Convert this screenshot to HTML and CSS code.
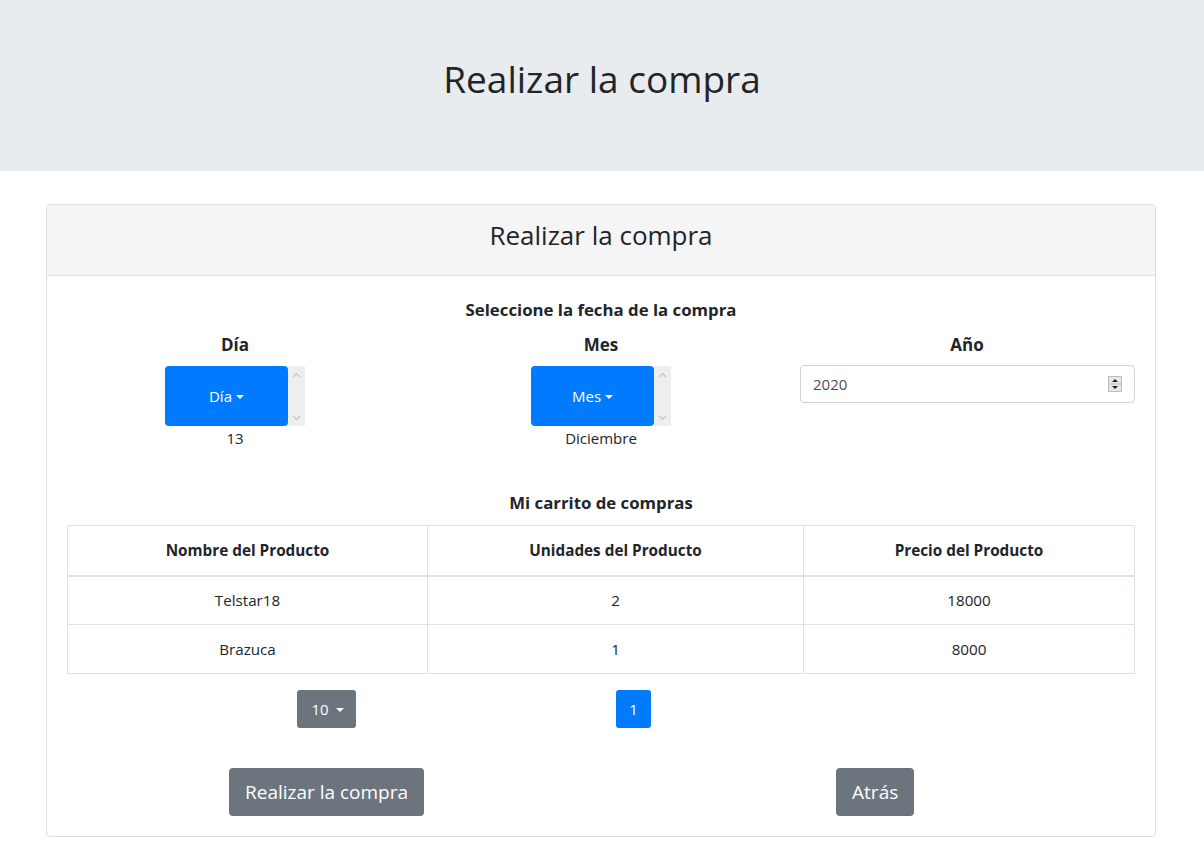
FILE: index.html
```html
<!DOCTYPE html>
<html lang="es">
<head>
<meta charset="utf-8">
<title>Realizar la compra</title>
<link rel="stylesheet" href="styles.css">
</head>
<body>
<header class="jumbo">
  <h1 class="jumbo-title">Realizar la compra</h1>
</header>
<main class="container">
  <section class="card">
    <div class="card-header"><h2 class="card-title">Realizar la compra</h2></div>
    <div class="card-body">
      <h5 class="section-title">Seleccione la fecha de la compra</h5>
      <div class="date-row">
        <div class="date-col">
          <div class="label">Día</div>
          <div class="picker">
            <button class="btn-primary picker-btn">Día<span class="caret"></span></button>
            <div class="scrollbar">
              <svg width="9" height="6" viewBox="0 0 9 6"><path d="M1 5 L4.5 1.5 L8 5" fill="none" stroke="#c3c3c3" stroke-width="1.2"/></svg>
              <svg width="9" height="6" viewBox="0 0 9 6"><path d="M1 1 L4.5 4.5 L8 1" fill="none" stroke="#c3c3c3" stroke-width="1.2"/></svg>
            </div>
          </div>
          <div class="value">13</div>
        </div>
        <div class="date-col">
          <div class="label">Mes</div>
          <div class="picker">
            <button class="btn-primary picker-btn">Mes<span class="caret"></span></button>
            <div class="scrollbar">
              <svg width="9" height="6" viewBox="0 0 9 6"><path d="M1 5 L4.5 1.5 L8 5" fill="none" stroke="#c3c3c3" stroke-width="1.2"/></svg>
              <svg width="9" height="6" viewBox="0 0 9 6"><path d="M1 1 L4.5 4.5 L8 1" fill="none" stroke="#c3c3c3" stroke-width="1.2"/></svg>
            </div>
          </div>
          <div class="value">Diciembre</div>
        </div>
        <div class="date-col">
          <div class="label">Año</div>
          <div class="year-input">
            <span class="year-text">2020</span>
            <span class="spinner">
              <svg width="14" height="16" viewBox="0 0 14 16">
                <rect x="0.5" y="0.5" width="13" height="15" fill="#e8e8e8" stroke="#bdbdbd"/>
                <line x1="1" y1="8" x2="13" y2="8" stroke="#bdbdbd"/>
                <path d="M4 6 L7 3 L10 6 Z" fill="#222"/>
                <path d="M4 10 L7 13 L10 10 Z" fill="#222"/>
              </svg>
            </span>
          </div>
        </div>
      </div>

      <h5 class="section-title cart-title">Mi carrito de compras</h5>
      <table class="cart">
        <thead>
          <tr><th class="c1">Nombre del Producto</th><th class="c2">Unidades del Producto</th><th class="c3">Precio del Producto</th></tr>
        </thead>
        <tbody>
          <tr><td>Telstar18</td><td>2</td><td>18000</td></tr>
          <tr><td>Brazuca</td><td>1</td><td>8000</td></tr>
        </tbody>
      </table>

      <div class="pager">
        <button class="btn-secondary size-btn">10<span class="caret"></span></button>
        <button class="btn-primary page-btn">1</button>
      </div>

      <div class="actions">
        <button class="btn-secondary btn-lg">Realizar la compra</button>
        <button class="btn-secondary btn-lg">Atrás</button>
      </div>
    </div>
  </section>
</main>
</body>
</html>
```
FILE: styles.css
```css
* { box-sizing: border-box; }
html, body { margin: 0; padding: 0; }
body {
  font-family: "Open Sans", "Noto Sans", "Liberation Sans", sans-serif;
  font-size: 15px;
  color: #212529;
  background: #fff;
}
button { font-family: inherit; border: 0; cursor: pointer; }

.jumbo {
  background: #e9ecef;
  height: 171px;
  display: flex;
  justify-content: center;
  padding-top: 54px;
  margin-bottom: 33px;
}
.jumbo-title {
  margin: 0;
  font-size: 37px;
  font-weight: 400;
  line-height: 50px;
}

.container {
  width: 1110px;
  margin: 0 48px 0 46px;
}
.card {
  border: 1px solid #dfdfdf;
  border-radius: 4px;
  height: 633px;
}
.card-header {
  background: #f5f5f5;
  border-bottom: 1px solid #dfdfdf;
  height: 71px;
  display: flex;
  justify-content: center;
  align-items: center;
  border-radius: 4px 4px 0 0;
}
.card-title {
  margin: 0;
  font-size: 26px;
  font-weight: 400;
  line-height: 36px;
  padding-bottom: 10px;
}
.card-body {
  padding: 20px 20px 0 20px;
}
.section-title {
  margin: 0;
  text-align: center;
  font-size: 16.8px;
  font-weight: 700;
  line-height: 28px;
}
.date-row {
  display: grid;
  grid-template-columns: 1fr 1fr 1fr;
  column-gap: 30px;
  margin-top: 10px;
}
.date-col {
  display: flex;
  flex-direction: column;
  align-items: center;
}
.label {
  font-weight: 700;
  font-size: 17px;
  line-height: 22px;
  margin-bottom: 10px;
}
.picker {
  display: flex;
  height: 60px;
}
.picker-btn {
  width: 123px;
  height: 60px;
  border-radius: 4px;
  font-size: 15px;
}
.btn-primary { background: #007bff; color: #fff; }
.btn-secondary { background: #6c757d; color: #fff; }
.caret {
  display: inline-block;
  width: 0; height: 0;
  border-left: 4px solid transparent;
  border-right: 4px solid transparent;
  border-top: 4.5px solid #fff;
  margin-left: 4px;
  vertical-align: 3px;
}
.scrollbar {
  width: 17px;
  background: #eeeeee;
  display: flex;
  flex-direction: column;
  justify-content: space-between;
  align-items: center;
  padding: 6px 0 5px;
}
.scrollbar svg { display: block; }
.value {
  line-height: 24px;
  font-size: 15px;
}
.year-input {
  align-self: stretch;
  margin-top: -1px;
  margin-left: 1px;
  height: 38px;
  border: 1px solid #ced4da;
  border-radius: 4px;
  display: flex;
  align-items: center;
  justify-content: space-between;
  padding: 0 12px 0 12px;
  color: #495057;
  font-size: 15px;
}
.spinner svg { display: block; }

.cart-title {
  margin-top: 39px;
  margin-bottom: 8px;
}
.cart {
  width: 100%;
  border-collapse: collapse;
  text-align: center;
  font-size: 15.2px;
}
.cart th, .cart td {
  border: 1px solid #dee2e6;
  height: 49px;
  padding: 0 12px;
  vertical-align: middle;
}
.cart th {
  font-weight: 700;
  border-bottom-width: 2px;
  height: 50px;
  font-size: 15.3px;
}
.c1 { width: 360px; }
.c2 { width: 376px; }
.c3 { width: 331px; }

.pager {
  display: flex;
  gap: 260px;
  padding-left: 230px;
  margin-top: 16px;
}
.size-btn {
  width: 59px;
  height: 38px;
  border-radius: 3px;
  font-size: 15px;
  padding: 0 0 0 2px;
}
.size-btn .caret { margin-left: 7px; }
.page-btn {
  width: 35px;
  height: 38px;
  border-radius: 3px;
  font-size: 15px;
}

.actions {
  display: flex;
  gap: 412px;
  padding-left: 162px;
  margin-top: 40px;
}
.btn-lg {
  height: 48px;
  border-radius: 4px;
  font-size: 19px;
  padding: 0 16px;
}
```
